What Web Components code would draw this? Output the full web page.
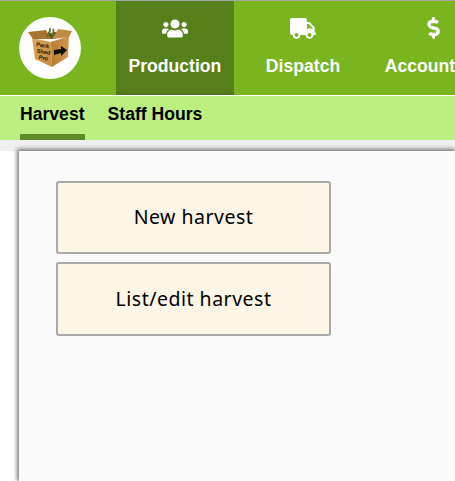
<!DOCTYPE html>
<html>
<head>
<meta charset="utf-8">
<title>Pack Shed Pro</title>
<style>
    html, body { margin: 0; padding: 0; height: 100%; overflow: hidden; background: #fff; }
    body { font-family: "Liberation Sans", Arial, sans-serif; display: flex; flex-direction: column; }
</style>
</head>
<body>
<app-header>
    <app-logo slot="logo"></app-logo>
    <nav-item active label="Production">
        <svg viewBox="0 0 640 512" width="26" height="21" fill="currentColor"><path d="M96 224c35 0 64-29 64-64s-29-64-64-64-64 29-64 64 29 64 64 64zm448 0c35 0 64-29 64-64s-29-64-64-64-64 29-64 64 29 64 64 64zm32 32h-64c-18 0-34 7-45 19 40 22 69 62 75 109h66c18 0 32-14 32-32v-32c0-35-29-64-64-64zm-256 0c62 0 112-50 112-112S382 32 320 32 208 82 208 144s50 112 112 112zm77 32h-8c-21 10-44 16-69 16s-48-6-69-16h-8c-64 0-115 52-115 115v29c0 26 21 48 48 48h288c27 0 48-22 48-48v-29c0-63-52-115-115-115zm-224-13c-12-12-28-19-45-19H64c-35 0-64 29-64 64v32c0 18 14 32 32 32h66c6-47 35-87 75-109z"/></svg>
    </nav-item>
    <nav-item label="Dispatch">
        <svg viewBox="0 0 640 512" width="26" height="21" fill="currentColor"><path d="M624 352h-16V244c0-13-5-25-14-34L494 110c-9-9-21-14-34-14h-44V48c0-26-22-48-48-48H48C22 0 0 22 0 48v320c0 26 22 48 48 48h16c0 53 43 96 96 96s96-43 96-96h128c0 53 43 96 96 96s96-43 96-96h48c9 0 16-7 16-16v-32c0-9-7-16-16-16zM160 464c-26 0-48-22-48-48s22-48 48-48 48 22 48 48-22 48-48 48zm320 0c-26 0-48-22-48-48s22-48 48-48 48 22 48 48-22 48-48 48zm80-208H416V144h44l100 100v12z"/></svg>
    </nav-item>
    <nav-item label="Accounting">
        <svg viewBox="0 0 288 512" width="13" height="22" fill="currentColor"><path d="M209 233L101 202c-12-4-21-15-21-28 0-16 13-29 29-29h66c12 0 24 4 34 10 6 4 14 3 19-2l35-34c7-7 6-18-2-24-25-19-55-29-86-29V16c0-9-7-16-16-16h-32c-9 0-16 7-16 16v48h-2C45 64-8 119 1 183c6 45 41 81 85 94l103 30c12 4 21 15 21 28 0 16-13 29-29 29h-66c-12 0-24-4-34-10-6-4-14-3-19 2l-35 34c-7 7-6 18 2 24 25 19 55 29 86 29v48c0 9 7 16 16 16h32c9 0 16-7 16-16v-48c47-1 91-29 106-73 22-63-16-124-76-137z"/></svg>
    </nav-item>
</app-header>
<sub-nav>
    <sub-item active>Harvest</sub-item>
    <sub-item>Staff Hours</sub-item>
</sub-nav>
<page-body>
    <content-panel>
        <big-button>New harvest</big-button>
        <big-button>List/edit harvest</big-button>
    </content-panel>
</page-body>

<script>
class AppHeader extends HTMLElement {
    constructor() {
        super();
        const shadowRoot = this.attachShadow({mode: 'open'});
        shadowRoot.innerHTML = `
            <style>
                :host {
                    display: flex;
                    flex: none;
                    height: 94px;
                    border-top: 1px solid #a5a5a5;
                    border-bottom: 1px solid #fff;
                    background: #78b51e;
                    overflow: hidden;
                }
                .logo {
                    flex: none;
                    width: 116px;
                    display: flex;
                    align-items: center;
                    padding-left: 19px;
                    box-sizing: border-box;
                }
                .items {
                    display: flex;
                    gap: 19.5px;
                    flex: none;
                }
            </style>
            <div class="logo"><slot name="logo"></slot></div>
            <div class="items"><slot></slot></div>
        `;
    }
}
customElements.define('app-header', AppHeader);

class AppLogo extends HTMLElement {
    constructor() {
        super();
        const shadowRoot = this.attachShadow({mode: 'open'});
        shadowRoot.innerHTML = `
            <style>
                :host {
                    display: block;
                    width: 62px;
                    height: 62px;
                    border-radius: 50%;
                    background: #fff;
                }
                svg { display: block; }
                text {
                    font-family: "Liberation Sans Narrow", "Liberation Sans", Arial, sans-serif;
                    font-weight: bold;
                    font-size: 5.6px;
                    fill: #1f1408;
                }
            </style>
            <svg width="62" height="62" viewBox="0 0 62 62">
                <defs>
                    <linearGradient id="front" x1="0" y1="0" x2="1" y2="1">
                        <stop offset="0" stop-color="#dba95c"/>
                        <stop offset="1" stop-color="#c48a3e"/>
                    </linearGradient>
                    <linearGradient id="side" x1="0" y1="0" x2="1" y2="0">
                        <stop offset="0" stop-color="#b67c33"/>
                        <stop offset="1" stop-color="#d09a4e"/>
                    </linearGradient>
                </defs>
                <polygon points="13,21 32,25 33,50 16,42" fill="url(#front)"/>
                <polygon points="32,25 50,19 49,40 33,50" fill="url(#side)"/>
                <polygon points="14,20 33,22 50,19 36,15" fill="#5e3f1c"/>
                <polygon points="9,15 27,13 32,22 14,22" fill="#a9732f"/>
                <polygon points="33,22 39,12 53,14 50,20" fill="#c08a42"/>
                <path d="M28 20 C29 16 32 15 31 11 M32 21 C34 17 36 15 34 12 M29 16 L36 18" stroke="#55752e" stroke-width="1.7" fill="none"/>
                <polygon points="35,33 42,32 42,29 48,33 42,39 42,36 35,38" fill="#0d0d0d"/>
                <text transform="translate(17 29) rotate(10)">Pack</text>
                <text transform="translate(17.5 35.5) rotate(10)">Shed</text>
                <text transform="translate(19.5 42) rotate(10)">Pro</text>
            </svg>
        `;
    }
}
customElements.define('app-logo', AppLogo);

class NavItem extends HTMLElement {
    constructor() {
        super();
        const shadowRoot = this.attachShadow({mode: 'open'});
        shadowRoot.innerHTML = `
            <style>
                :host {
                    display: flex;
                    flex-direction: column;
                    align-items: center;
                    box-sizing: border-box;
                    padding: 16px 12.5px 0;
                    color: #fff;
                    font-size: 17.6px;
                    font-weight: bold;
                    white-space: nowrap;
                }
                :host([active]) {
                    background: #56801a;
                    border-bottom: 3px solid #4f7618;
                }
                .icon {
                    height: 22px;
                    display: flex;
                    align-items: center;
                }
                .label { margin-top: 17px; line-height: 20px; }
            </style>
            <div class="icon"><slot></slot></div>
            <div class="label"></div>
        `;
        shadowRoot.querySelector('.label').textContent = this.getAttribute('label');
    }
}
customElements.define('nav-item', NavItem);

class SubNav extends HTMLElement {
    constructor() {
        super();
        const shadowRoot = this.attachShadow({mode: 'open'});
        shadowRoot.innerHTML = `
            <style>
                :host {
                    display: flex;
                    flex: none;
                    gap: 23px;
                    height: 44px;
                    padding-left: 20px;
                    background: #bbef80;
                }
            </style>
            <slot></slot>
        `;
    }
}
customElements.define('sub-nav', SubNav);

class SubItem extends HTMLElement {
    constructor() {
        super();
        const shadowRoot = this.attachShadow({mode: 'open'});
        shadowRoot.innerHTML = `
            <style>
                :host {
                    display: block;
                    box-sizing: border-box;
                    height: 44px;
                    padding-top: 8px;
                    line-height: 20px;
                    color: #000;
                    font-size: 17.6px;
                    font-weight: bold;
                }
                :host([active]) { border-bottom: 6px solid #5f8c28; }
            </style>
            <slot></slot>
        `;
    }
}
customElements.define('sub-item', SubItem);

class PageBody extends HTMLElement {
    constructor() {
        super();
        const shadowRoot = this.attachShadow({mode: 'open'});
        shadowRoot.innerHTML = `
            <style>
                :host {
                    display: flex;
                    flex: 1;
                    padding: 11px 0 0 19px;
                    background: linear-gradient(#f0f0f0, #f0f0f0 11px, #fff 11px);
                }
            </style>
            <slot></slot>
        `;
    }
}
customElements.define('page-body', PageBody);

class ContentPanel extends HTMLElement {
    constructor() {
        super();
        const shadowRoot = this.attachShadow({mode: 'open'});
        shadowRoot.innerHTML = `
            <style>
                :host {
                    display: flex;
                    flex-direction: column;
                    flex: 1;
                    gap: 8px;
                    padding: 30px 0 0 37px;
                    background: #fafafa;
                    box-shadow: -1px -1px 4px 1px #777;
                }
            </style>
            <slot></slot>
        `;
    }
}
customElements.define('content-panel', ContentPanel);

class BigButton extends HTMLElement {
    constructor() {
        super();
        const shadowRoot = this.attachShadow({mode: 'open'});
        shadowRoot.innerHTML = `
            <style>
                :host {
                    display: flex;
                    align-items: center;
                    justify-content: center;
                    box-sizing: border-box;
                    width: 275px;
                    height: 73.4px;
                    padding-bottom: 2px;
                    border: 2px solid #a9a9a9;
                    border-radius: 3px;
                    background: #fdf5e6;
                    color: #000;
                    font-family: "Noto Sans", sans-serif;
                    font-size: 19.5px;
                    letter-spacing: 0.5px;
                }
            </style>
            <slot></slot>
        `;
    }
}
customElements.define('big-button', BigButton);
</script>
</body>
</html>
